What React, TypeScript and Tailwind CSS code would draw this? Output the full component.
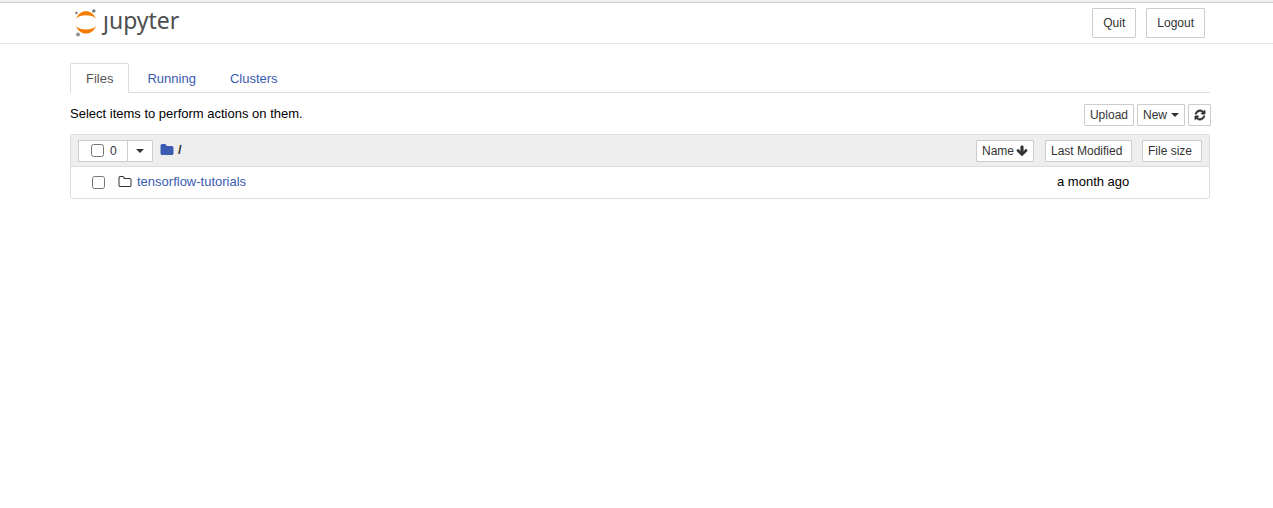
import type { ReactNode } from "react";

const icons = {
  refresh:
    "M1639 1056q0 5-1 7-64 268-268 434.5t-478 166.5q-146 0-282.5-55t-243.5-157l-129 129q-19 19-45 19t-45-19-19-45v-448q0-26 19-45t45-19h448q26 0 45 19t19 45-19 45l-137 137q71 66 161 102t187 36q134 0 250-65t186-179q11-17 53-117 8-23 30-23h192q13 0 22.5 9.5t9.5 22.5zm25-800v448q0 26-19 45t-45 19h-448q-26 0-45-19t-19-45 19-45l138-138q-148-137-349-137-134 0-250 65t-186 179q-11 17-53 117-8 23-30 23h-199q-13 0-22.5-9.5t-9.5-22.5v-7q65-268 270-434.5t480-166.5q146 0 284 55.5t245 156.5l130-129q19-19 45-19t45 19 19 45z",
  arrowDown:
    "M1675 832q0 53-37 90l-651 652q-39 37-91 37-53 0-90-37l-651-652q-38-36-38-90 0-53 38-91l74-75q39-37 91-37 53 0 90 37l294 294v-704q0-52 38-90t90-38h128q52 0 90 38t38 90v704l294-294q37-37 90-37 52 0 91 37l75 75q37 39 37 91z",
  folder:
    "M1728 608v704q0 92-66 158t-158 66h-1216q-92 0-158-66t-66-158v-960q0-92 66-158t158-66h320q92 0 158 66t66 158v32h672q92 0 158 66t66 158z",
  folderOutline:
    "M1600 1312v-704q0-40-28-68t-68-28h-704q-40 0-68-28t-28-68v-64q0-40-28-68t-68-28h-320q-40 0-68 28t-28 68v960q0 40 28 68t68 28h1216q40 0 68-28t28-68zm128-704v704q0 92-66 158t-158 66h-1216q-92 0-158-66t-66-158v-960q0-92 66-158t158-66h320q92 0 158 66t66 158v32h672q92 0 158 66t66 158z",
};

function Icon({ name, className = "" }: { name: keyof typeof icons; className?: string }) {
  return (
    <svg viewBox="0 0 1792 1792" className={`shrink-0 fill-current ${className}`} aria-hidden="true">
      <path d={icons[name]} />
    </svg>
  );
}

function Caret() {
  return (
    <svg viewBox="0 0 8 4" className="h-1 w-2 shrink-0 fill-current" aria-hidden="true">
      <path d="M0 0h8L4 4z" />
    </svg>
  );
}

function Button({ className = "", label, children }: { className?: string; label?: string; children: ReactNode }) {
  return (
    <button
      type="button"
      aria-label={label}
      className={`flex items-center rounded-[1px] border border-[#ccc] bg-white text-xs text-[#333] hover:bg-[#e6e6e6] ${className}`}
    >
      {children}
    </button>
  );
}

function Logo() {
  return (
    <a href="#home" aria-label="jupyter" className="flex h-10 items-center gap-1.5 text-[#4e4e4e]">
      <svg viewBox="0 0 22 28" className="h-7 w-[22px]" aria-hidden="true">
        <path d="M1 9.5C3 4.8 6.8 2.200 11 2.200S19 4.800 21 9.500C18.500 7.300 15 6.200 11 6.200S3.500 7.300 1 9.500z" fill="#f57c00" />
        <path d="M1 17.200C3 21.900 6.800 24.500 11 24.500S19 21.900 21 17.200C18.500 19.400 15 20.500 11 20.500S3.500 19.400 1 17.200z" fill="#f57c00" />
        <circle cx="18.800" cy="1.900" r="1.700" fill="#767677" />
        <circle cx="1.400" cy="4" r="1.200" fill="#767677" />
        <circle cx="3" cy="25.600" r="2" fill="#8e8e8e" />
      </svg>
      <span className="pb-1.5 font-['Noto_Sans',sans-serif] text-[23px] leading-7">ȷupyter</span>
    </a>
  );
}

function Tab({ active = false, children }: { active?: boolean; children: ReactNode }) {
  return (
    <a
      href={`#${String(children).toLowerCase()}`}
      role="tab"
      aria-selected={active}
      className={
        active
          ? "-mb-px rounded-t-xs border border-b-0 border-[#ddd] bg-white px-[15px] pt-[5px] text-[#555]"
          : "px-4 pt-1.5 text-[#3b5bb3]"
      }
    >
      {children}
    </a>
  );
}

export default function App() {
  return (
    <div className="border-t-2 border-[#eee] bg-white font-['Liberation_Sans',Arial,sans-serif] text-[13px] leading-5 text-black">
      <header className="flex h-[42px] items-center justify-between border-t border-b border-t-[#ccc] border-b-[#e7e7e7] pr-[68px] pl-[75px]">
        <Logo />
        <div className="flex gap-2.5">
          <Button className="h-[30px] px-2.5">Quit</Button>
          <Button className="h-[30px] px-2.5">Logout</Button>
        </div>
      </header>

      <main className="pt-[19px] pr-[63px] pl-[70px]">
        <nav role="tablist" className="flex h-[30px] gap-0.5 border-b border-[#ddd]">
          <Tab active>Files</Tab>
          <Tab>Running</Tab>
          <Tab>Clusters</Tab>
        </nav>

        <div className="flex h-[41px] items-center justify-between">
          <p>Select items to perform actions on them.</p>
          <div className="-mr-px flex gap-[3px] pt-0.5">
            <Button className="h-[22px] px-[5px]">Upload</Button>
            <Button className="h-[22px] gap-1 px-[5px]">
              New <Caret />
            </Button>
            <Button className="h-[22px] w-[23px] justify-center" label="Refresh">
              <Icon name="refresh" className="size-3 stroke-current stroke-[80]" />
            </Button>
          </div>
        </div>

        <div className="overflow-hidden rounded-xs border border-[#ddd]">
          <table className="w-full border-collapse">
            <thead>
              <tr className="h-[31px] border-b border-[#ddd] bg-[#eee]">
                <th className="p-0 pt-px pl-[7px] text-left font-normal">
                  <div className="flex items-center">
                    <label className="flex h-[22px] w-[50px] items-center gap-1.5 border border-[#ccc] bg-white pl-3 text-xs text-[#333]">
                      <input type="checkbox" className="size-[13px]" aria-label="Select all" />0
                    </label>
                    <Button className="-ml-px h-[22px] px-2" label="Selection menu">
                      <Caret />
                    </Button>
                    <div className="flex items-center gap-1 pb-0.5 pl-[7px]">
                      <a href="#root" className="text-[#3b5bb3]" aria-label="Home folder">
                        <Icon name="folder" className="size-[14px]" />
                      </a>
                      <span className="font-bold text-[#333]">/</span>
                    </div>
                  </div>
                </th>
                <th className="w-[69px] p-0 pt-px font-normal">
                  <Button className="h-[22px] gap-0.5 px-[5px]">
                    Name <Icon name="arrowDown" className="size-3 stroke-current stroke-[80]" />
                  </Button>
                </th>
                <th className="w-[97px] p-0 pt-px font-normal">
                  <Button className="h-[22px] w-[87px] px-[5px]">Last Modified</Button>
                </th>
                <th className="w-[67px] p-0 pt-px font-normal">
                  <Button className="h-[22px] w-[60px] px-[5px]">File size</Button>
                </th>
              </tr>
            </thead>
            <tbody>
              <tr className="h-8">
                <td colSpan={2} className="p-0 pl-[21px]">
                  <div className="flex items-center">
                    <input type="checkbox" className="size-[13px]" aria-label="Select tensorflow-tutorials" />
                    <Icon name="folderOutline" className="ml-[13px] size-[14px] text-[#333]" />
                    <a href="#tensorflow-tutorials" className="ml-[5px] text-[#3b5bb3]">
                      tensorflow-tutorials
                    </a>
                  </div>
                </td>
                <td className="p-0 pl-3">a month ago</td>
                <td className="p-0" />
              </tr>
            </tbody>
          </table>
        </div>
      </main>
    </div>
  );
}
